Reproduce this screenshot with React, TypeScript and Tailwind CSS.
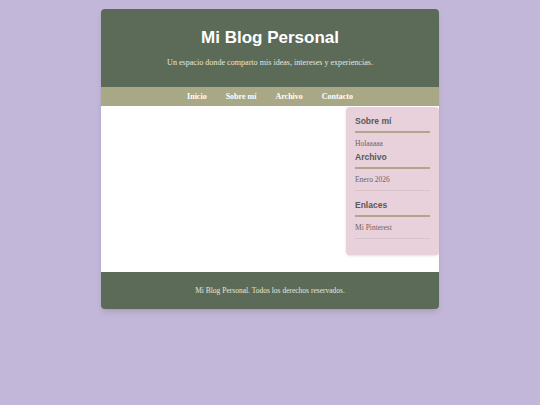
const serif = { fontFamily: '"Liberation Serif", "Times New Roman", serif' };

function SidebarSection({
  title,
  items,
  plain,
  className = '',
}: {
  title: string;
  items: string[];
  plain?: boolean;
  className?: string;
}) {
  return (
    <section className={className}>
      <h3 className="font-['Liberation_Sans',Arial,sans-serif] text-[8.5px] font-bold leading-[11px] text-[#5a5858] pb-[4px] border-b-2 border-[#b3a48c]">
        {title}
      </h3>
      {plain ? (
        <p className="mt-[6px] text-[7.5px] leading-[10px] text-[#6a6466]" style={serif}>
          {items[0]}
        </p>
      ) : (
        <ul className="mt-[6px]">
          {items.map((item) => (
            <li
              key={item}
              className="text-[7.5px] leading-[10px] text-[#6a6466] pb-[5px] border-b border-[#d9c3ca]"
              style={serif}
            >
              {item}
            </li>
          ))}
        </ul>
      )}
    </section>
  );
}

export default function App() {
  return (
    <div className="min-h-[405px] w-full bg-[#c3b7d9] pt-[9px]">
      <div className="mx-auto w-[338px] overflow-hidden rounded-[4px] shadow-md">
        <header className="h-[78px] bg-[#5c6b57] flex flex-col items-center pt-[19px]">
          <h1 className="font-['Liberation_Sans',Arial,sans-serif] text-[17px] font-bold leading-[20px] text-white">
            Mi Blog Personal
          </h1>
          <p className="mt-[10px] text-[8.1px] leading-[10px] text-[#e6e6df]" style={serif}>
            Un espacio donde comparto mis ideas, intereses y experiencias.
          </p>
        </header>

        <nav className="h-[19px] bg-[#a9a886] flex items-center justify-center gap-[19px]">
          {['Inicio', 'Sobre mí', 'Archivo', 'Contacto'].map((link) => (
            <a key={link} className="text-[8px] font-bold leading-[10px] text-white" style={serif}>
              {link}
            </a>
          ))}
        </nav>

        <main className="flex bg-white">
          <div className="flex-1" />
          <aside className="w-[93px] mt-[1px] mb-[17px] rounded-[4px] bg-[#e8d1da] px-[9px] pt-[9px] pb-[16px] shadow-sm">
            <SidebarSection title="Sobre mí" items={['Holaaaaa']} plain />
            <SidebarSection title="Archivo" items={['Enero 2026']} className="mt-[2.5px]" />
            <SidebarSection title="Enlaces" items={['Mi Pinterest']} className="mt-[9.5px]" />
          </aside>
        </main>

        <footer className="h-[37px] bg-[#5c6b57] flex items-center justify-center">
          <p className="text-[7.5px] leading-[10px] text-[#e6e6df]" style={serif}>
            Mi Blog Personal. Todos los derechos reservados.
          </p>
        </footer>
      </div>
    </div>
  );
}
